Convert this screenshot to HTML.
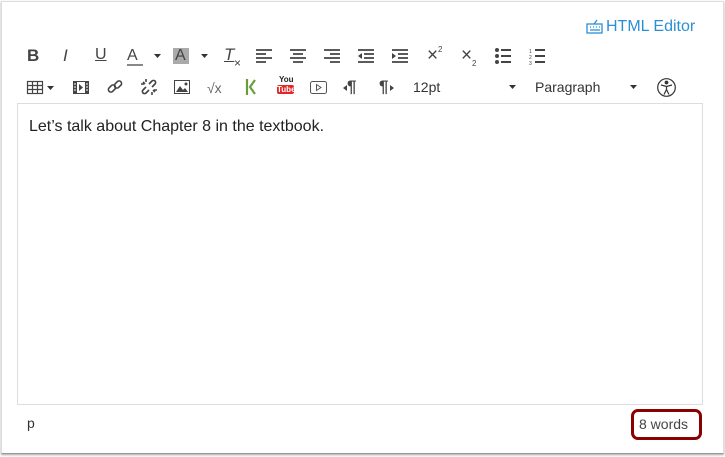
<!DOCTYPE html>
<html><head><meta charset="utf-8"><style>
body{margin:0;width:725px;height:457px;background:#fff;position:relative;font-family:"Liberation Sans",Arial,sans-serif;overflow:hidden}
.frame{position:absolute;left:1px;top:1px;width:721px;height:451px;border:1px solid #ddd;border-bottom:1px solid #999;box-shadow:0 1px 2px rgba(0,0,0,.35);background:#fff}
.a{position:absolute}
.ic{position:absolute;color:#444;font-size:16px;line-height:20px}
svg{position:absolute;overflow:visible}
.edit{position:absolute;left:17px;top:103px;width:684px;height:300px;border:1px solid #ddd}
</style></head><body>
<div class="frame"></div>
<div class="a" style="left:586px;top:18px;color:#2b8fd6;font-size:16px">
<svg style="left:0;top:2px" width="17" height="14"><rect x="1" y="4" width="15" height="9" fill="none" stroke="#2b8fd6" stroke-width="1.3"/><path d="M4 7h1M7 7h1M10 7h1M13 7h1M4 10h10M8 4 11 0" stroke="#2b8fd6" stroke-width="1.3"/></svg>
<span style="margin-left:20px">HTML Editor</span></div>

<!-- row 1 -->
<div class="ic" style="left:27px;top:46px;font-weight:bold;font-size:17px">B</div>
<div class="ic" style="left:63px;top:46px;font-style:italic;font-size:17px">I</div>
<div class="ic" style="left:95px;top:45px;font-size:16px;text-decoration:underline">U</div>
<div class="ic" style="left:127px;top:46px;font-size:16px">A</div>
<div class="a" style="left:127px;top:64px;width:16px;height:2px;background:#888"></div>
<svg style="left:154px;top:54px" width="8" height="4"><path d="M0 0h7L3.5 4z" fill="#333"/></svg>
<div class="a" style="left:173px;top:48px;width:16px;height:16px;background:#aaa"></div>
<div class="ic" style="left:175px;top:46px;font-size:16px">A</div>
<svg style="left:201px;top:54px" width="8" height="4"><path d="M0 0h7L3.5 4z" fill="#333"/></svg>
<div class="ic" style="left:224px;top:45px;font-style:italic;font-size:17px;text-decoration:underline">T</div>
<div class="ic" style="left:234px;top:53px;font-size:12px">×</div>
<svg style="left:256px;top:49px" width="16" height="14" stroke="#444" stroke-width="1.8"><path d="M0 1h16M0 5h10M0 9h16M0 13h10"/></svg>
<svg style="left:290px;top:49px" width="16" height="14" stroke="#444" stroke-width="1.8"><path d="M0 1h16M3 5h10M0 9h16M3 13h10"/></svg>
<svg style="left:324px;top:49px" width="16" height="14" stroke="#444" stroke-width="1.8"><path d="M0 1h16M6 5h10M0 9h16M6 13h10"/></svg>
<svg style="left:358px;top:49px" width="16" height="14" stroke="#444" stroke-width="1.8"><path d="M0 1h16M6 5h10M6 9h10M0 13h16"/><path d="M4 4v6L0 7z" fill="#444" stroke="none"/></svg>
<svg style="left:392px;top:49px" width="16" height="14" stroke="#444" stroke-width="1.8"><path d="M0 1h16M6 5h10M6 9h10M0 13h16"/><path d="M0 4v6l4-3z" fill="#444" stroke="none"/></svg>
<div class="ic" style="left:427px;top:46px;font-size:19px">×</div><div class="a" style="left:438px;top:45px;font-size:8px;color:#444">2</div>
<div class="ic" style="left:461px;top:46px;font-size:19px">×</div><div class="a" style="left:472px;top:59px;font-size:8px;color:#444">2</div>
<svg style="left:495px;top:48px" width="16" height="16" fill="#444"><circle cx="2" cy="2" r="2"/><circle cx="2" cy="8" r="2"/><circle cx="2" cy="14" r="2"/><path d="M6 1h10v2H6zM6 7h10v2H6zM6 13h10v2H6z"/></svg>
<svg style="left:529px;top:48px" width="16" height="16" fill="#444"><text x="0" y="5" font-size="5">1</text><text x="0" y="11" font-size="5">2</text><text x="0" y="17" font-size="5">3</text><path d="M6 1h10v2H6zM6 7h10v2H6zM6 13h10v2H6z"/></svg>

<!-- row 2 -->
<svg style="left:27px;top:81px" width="16" height="13" stroke="#444" stroke-width="1.2" fill="none"><rect x=".5" y=".5" width="15" height="12"/><path d="M0 4.5h16M0 8.5h16M5.5 0v13M10.5 0v13"/></svg>
<svg style="left:47px;top:86px" width="8" height="4"><path d="M0 0h7L3.5 4z" fill="#333"/></svg>
<svg style="left:73px;top:81px" width="16" height="13"><rect x=".5" y=".5" width="15" height="12" fill="none" stroke="#444"/><path d="M0 0h4v13H0zM12 0h4v13h-4z" fill="#444"/><path d="M1 3h2M1 6h2M1 9h2M13 3h2M13 6h2M13 9h2" stroke="#fff"/><path d="M6 3v7l4-3.5z" fill="#444"/></svg>
<svg style="left:107px;top:79px" width="16" height="16" stroke="#444" stroke-width="1.6" fill="none"><rect x="1" y="7" width="8" height="5" rx="2.5" transform="rotate(-45 5 9.5)"/><rect x="7" y="3" width="8" height="5" rx="2.5" transform="rotate(-45 11 5.5)"/></svg>
<svg style="left:141px;top:79px" width="16" height="16" stroke="#444" stroke-width="1.6" fill="none"><path d="M5 8 2 11a2 2 0 0 0 3 3l3-3M11 8l3-3a2 2 0 0 0-3-3L8 5M2 3l2 2M5 0v3M0 5h3M14 13l-2-2M11 16v-3M16 11h-3"/></svg>
<svg style="left:174px;top:80px" width="16" height="14"><rect x=".5" y=".5" width="15" height="13" fill="none" stroke="#444"/><path d="M2 12l4-6 3 4 2-2 3 4z" fill="#444"/><circle cx="12" cy="4" r="1.5" fill="#444"/></svg>
<div class="ic" style="left:207px;top:78px;font-size:14px;color:#666">√x</div>
<svg style="left:245px;top:79px" width="12" height="16" fill="none" stroke="#6a9e3a" stroke-width="2.2"><path d="M2 0v16M10 1 5 8l5 7"/></svg>
<div class="a" style="left:279px;top:76px;font-size:8px;font-weight:bold;color:#222;line-height:8px">You</div>
<div class="a" style="left:277px;top:85px;width:17px;height:9px;background:#e12727;border-radius:2px;color:#fff;font-size:8px;font-weight:bold;line-height:9px;text-align:center">Tube</div>
<svg style="left:310px;top:81px" width="17" height="13" stroke="#555" fill="none"><rect x=".5" y=".5" width="16" height="12" rx="2"/><path d="M6.5 3.5v6l4.5-3z"/></svg>
<div class="ic" style="left:347px;top:77px;font-weight:bold;font-size:17px">¶</div><svg style="left:343px;top:85px" width="4" height="6"><path d="M0 3 4 0v6z" fill="#444"/></svg>
<div class="ic" style="left:379px;top:77px;font-weight:bold;font-size:17px">¶</div><svg style="left:390px;top:85px" width="4" height="6"><path d="M4 3 0 0v6z" fill="#444"/></svg>
<div class="a" style="left:413px;top:79px;font-size:14px;color:#333">12pt</div>
<svg style="left:509px;top:85px" width="8" height="4"><path d="M0 0h7L3.5 4z" fill="#333"/></svg>
<div class="a" style="left:535px;top:79px;font-size:14px;color:#333">Paragraph</div>
<svg style="left:630px;top:85px" width="8" height="4"><path d="M0 0h7L3.5 4z" fill="#333"/></svg>
<svg style="left:657px;top:78px" width="19" height="19" stroke="#333" fill="none" stroke-width="1.2"><circle cx="9.5" cy="9.5" r="8.8"/><circle cx="9.5" cy="4.5" r="1.3" fill="#333"/><path d="M4 7l5.5 1.5L15 7M9.5 8.5v3l-2.5 5M9.5 11.5l2.5 5"/></svg>

<div class="edit"></div>
<div class="a" style="left:29px;top:118px;font-size:16px;color:#222">Let’s talk about Chapter 8 in the textbook.</div>
<div class="a" style="left:27px;top:415px;font-size:14px;color:#333">p</div>
<div class="a" style="left:631px;top:409px;width:65px;height:25px;border:3px solid #8b0000;border-radius:7px"></div>
<div class="a" style="left:639px;top:416px;font-size:14px;color:#444">8 words</div>
</body></html>
